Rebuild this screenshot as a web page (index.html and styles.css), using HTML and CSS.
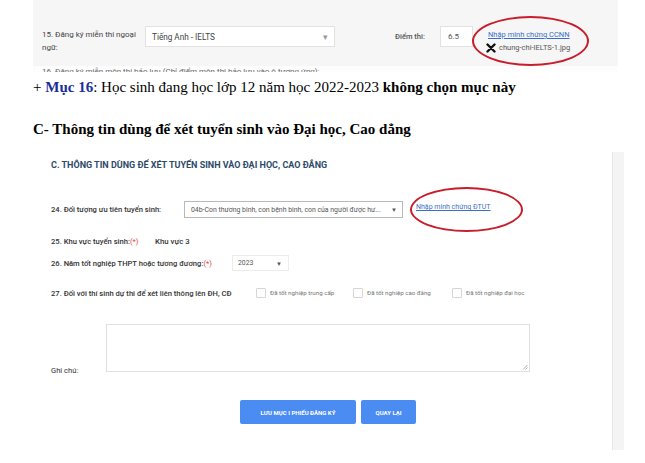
FILE: index.html
```html
<!DOCTYPE html>
<html lang="vi">
<head>
<meta charset="utf-8">
<link rel="stylesheet" href="styles.css">
</head>
<body>
<div class="page">
  <div class="shot1">
    <div class="row15">
      <div class="lbl15">15. Đăng ký miễn thi ngoại ngữ:</div>
      <div class="sel15"><span>Tiếng Anh - IELTS</span><span class="caret">▾</span></div>
      <div class="score-lbl">Điểm thi:</div>
      <div class="score-inp">6.5</div>
      <div class="proof">
        <a class="link">Nhập minh chứng CCNN</a>
        <div class="file">
          <svg class="xicon" viewBox="0 0 10 10" width="10" height="10"><path d="M1.5 1.5 L8.5 8.5 M8.5 1.5 L1.5 8.5" stroke="#111" stroke-width="2.4" stroke-linecap="round"/></svg>
          <span>chung-chi-IELTS-1.jpg</span>
        </div>
      </div>
    </div>
    <div class="row16">16. Đăng ký miễn môn thi bảo lưu (Chỉ điểm môn thi bảo lưu vào ô tương ứng):</div>
  </div>

  <p class="doc p1">+ <b class="blue">Mục 16</b>: Học sinh đang học lớp 12 năm học 2022-2023 <b>không chọn mục này</b></p>
  <p class="doc p2"><b>C- Thông tin dùng để xét tuyển sinh vào Đại học, Cao dẳng</b></p>

  <div class="shot2">
    <div class="form">
      <div class="title">C. THÔNG TIN DÙNG ĐỂ XÉT TUYỂN SINH VÀO ĐẠI HỌC, CAO ĐẲNG</div>
      <div class="row r24">
        <div class="lbl w24">24. Đối tượng ưu tiên tuyển sinh:</div>
        <div class="sel24"><span>04b-Con thương binh, con bệnh binh, con của người được hư...</span><span class="tri">▼</span></div>
        <a class="link link2">Nhập minh chứng ĐTUT</a>
      </div>
      <div class="row r25">
        <div class="lbl w25">25. Khu vực tuyển sinh:<span class="req">(*)</span></div>
        <div class="val">Khu vực 3</div>
      </div>
      <div class="row r26">
        <div class="lbl w26">26. Năm tốt nghiệp THPT hoặc tương đương:<span class="req">(*)</span></div>
        <div class="sel26"><span>2023</span><span class="tri">▼</span></div>
      </div>
      <div class="row r27">
        <div class="lbl w27">27. Đối với thí sinh dự thi để xét liên thông lên ĐH, CĐ</div>
        <div class="chk c1"><span class="box"></span><span>Đã tốt nghiệp trung cấp</span></div>
        <div class="chk c2"><span class="box"></span><span>Đã tốt nghiệp cao đẳng</span></div>
        <div class="chk c3"><span class="box"></span><span>Đã tốt nghiệp đại học</span></div>
      </div>
      <div class="row r28">
        <div class="lbl-note">Ghi chú:</div>
        <div class="textarea"><svg class="grip" viewBox="0 0 6 6" width="6" height="6"><path d="M5.5 1 L1 5.5 M5.5 3.5 L3.5 5.5" stroke="#999" stroke-width="0.8"/></svg></div>
      </div>
      <div class="buttons">
        <div class="btn b1">LƯU MỤC I PHIẾU ĐĂNG KÝ</div>
        <div class="btn b2">QUAY LẠI</div>
      </div>
    </div>
    <div class="sbar"></div>
  </div>

  <div class="ring ring1"></div>
  <div class="ring ring2"></div>
</div>
</body>
</html>
```

FILE: styles.css
```css
html, body {
  margin: 0;
  padding: 0;
  background: #fff;
}
.page {
  position: relative;
  width: 645px;
  height: 463px;
  overflow: hidden;
  font-family: Roboto, "Noto Sans", sans-serif;
  color: #333;
}

/* ---------- top screenshot ---------- */
.shot1 {
  margin-left: 33px;
  width: 585px;
  height: 72px;
  background: #f6f6f6;
  overflow: hidden;
}
.row15 {
  display: flex;
  align-items: flex-start;
  padding: 26px 0 0 9px;
  height: 40px;
}
.lbl15 {
  width: 96px;
  margin-right: 7px;
  font-size: 8px;
  line-height: 13px;
  padding-top: 2px;
  color: #444;
}
.sel15 {
  width: 176px;
  height: 19px;
  background: #fff;
  border: 1px solid #e2e2e2;
  display: flex;
  align-items: center;
  justify-content: space-between;
  padding: 0 6px 0 6px;
  font-size: 8.2px;
  color: #444;
}
.caret {
  color: #999;
  font-size: 9px;
}
.score-lbl {
  margin-left: 60px;
  width: 45px;
  font-size: 7.5px;
  font-weight: 500;
  color: #555;
  padding-top: 6px;
}
.score-inp {
  width: 24px;
  height: 19px;
  background: #fff;
  border: 1px solid #e2e2e2;
  padding-left: 7px;
  font-size: 8px;
  line-height: 19px;
  color: #555;
}
.proof {
  margin-left: 15px;
  padding-top: 4px;
  font-size: 7.5px;
  line-height: 10px;
}
.link {
  color: #3b6fc6;
  text-decoration: underline;
  font-size: 7.5px;
}
.file {
  display: flex;
  align-items: center;
  gap: 3px;
  margin-top: 3px;
  margin-left: -2px;
  font-size: 7.5px;
  color: #555;
}
.row16 {
  padding: 1px 0 0 9px;
  height: 6px;
  background: #fdfdfd;
  font-size: 8px;
  line-height: 10px;
  color: #666;
  white-space: nowrap;
}

/* ---------- document text ---------- */
.doc {
  margin: 0 0 0 33px;
  font-family: "Liberation Serif", "Times New Roman", serif;
  font-size: 15px;
  line-height: 18px;
  color: #000;
  white-space: nowrap;
}
.p1 { margin-top: 6px; }
.p2 { margin-top: 24px; }
.blue { color: #1a2f9c; }

/* ---------- second screenshot ---------- */
.shot2 {
  margin: 14px 0 0 33px;
  width: 591px;
  height: 298px;
  display: flex;
}
.form {
  flex: 1;
  padding-left: 18px;
}
.sbar {
  width: 11px;
  border-left: 1px solid #e6e6e6;
  background: #f4f4f4;
}
.title {
  margin-top: 8px;
  font-size: 9px;
  font-weight: 700;
  color: #2d4a6a;
}
.row {
  display: flex;
  align-items: center;
}
.lbl {
  font-size: 7.6px;
  font-weight: 500;
  color: #333;
}
.req { color: #e04848; font-weight: 400; }
.r24 { margin-top: 31px; height: 17px; }
.w24 { width: 133px; }
.sel24 {
  width: 206px;
  height: 15px;
  border: 1px solid #b9b9b9;
  background: #fff;
  display: flex;
  align-items: center;
  justify-content: space-between;
  padding: 0 5px 0 6px;
  font-size: 6.9px;
  color: #555;
  white-space: nowrap;
}
.tri { font-size: 6px; color: #555; }
.link2 {
  margin-left: 13px;
  font-size: 7px;
  align-self: flex-start;
  margin-top: 2px;
}
.r25 { margin-top: 17px; height: 12px; }
.w25 { width: 104px; }
.val { font-size: 7.8px; font-weight: 500; color: #333; }
.r26 { margin-top: 8px; height: 16px; }
.w26 { width: 181px; }
.sel26 {
  width: 44px;
  height: 14px;
  border: 1px solid #ececec;
  display: flex;
  align-items: center;
  justify-content: space-between;
  padding: 0 6px 0 5px;
  font-size: 6.8px;
  color: #555;
}
.r27 { margin-top: 16px; height: 12px; }
.w27 { width: 205px; }
.chk {
  display: flex;
  align-items: center;
  gap: 4px;
  font-size: 6.2px;
  color: #777;
}
.c1 { width: 97px; }
.c2 { width: 99px; }
.box {
  width: 8px;
  height: 8px;
  border: 1px solid #d6d6d6;
  border-radius: 1px;
  background: #fff;
}
.r28 {
  margin-top: 25px;
  align-items: flex-end;
}
.lbl-note {
  width: 55px;
  font-size: 7.6px;
  color: #333;
  margin-bottom: -3px;
}
.textarea {
  width: 422px;
  height: 46px;
  border: 1px solid #e0e0e0;
  background: #fff;
  display: flex;
  justify-content: flex-end;
  align-items: flex-end;
}
.grip { margin: 0 1px 1px 0; }
.buttons {
  display: flex;
  gap: 5px;
  margin: 28px 0 0 189px;
}
.btn {
  height: 24px;
  background: #4b8cf2;
  color: #fff;
  font-size: 6px;
  font-weight: 700;
  border-radius: 2px;
  display: flex;
  align-items: center;
  justify-content: center;
}
.b1 { width: 116px; }
.b2 { width: 55px; }

/* ---------- red hand-drawn rings (overlays) ---------- */
.ring {
  position: absolute;
  border: 2.5px solid #c81d2c;
  border-radius: 50%;
  box-sizing: border-box;
}
.ring1 { left: 472px; top: 16px; width: 117px; height: 50px; }
.ring2 { left: 410px; top: 187px; width: 113px; height: 45px; }
```
